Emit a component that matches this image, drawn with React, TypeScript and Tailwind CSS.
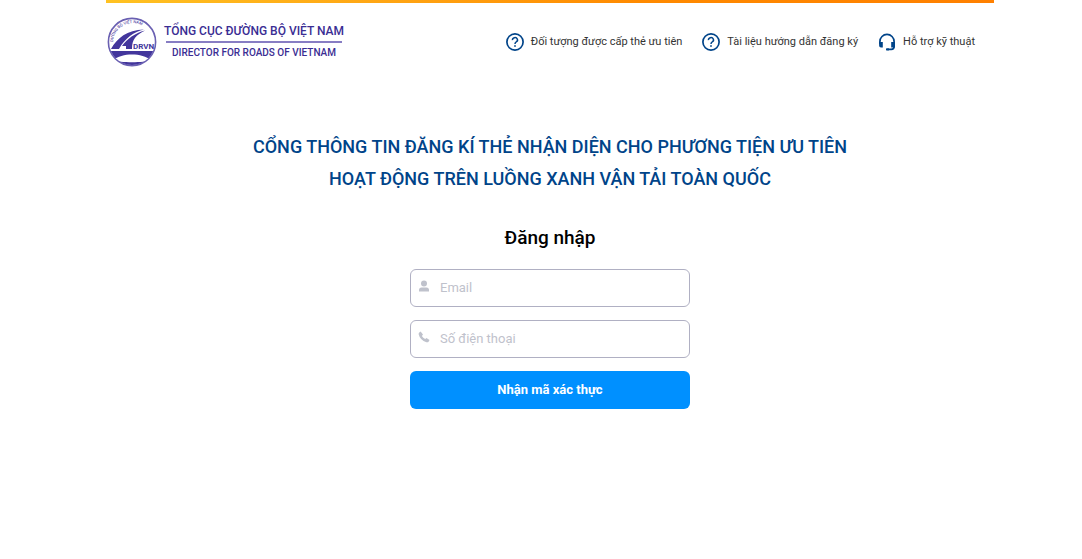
import React, { useState } from 'react';

const Logo = () => (
  <svg viewBox="0 0 50 50" className="size-[50px] shrink-0" role="img" aria-label="DRVN">
    <defs>
      <clipPath id="logo-disc">
        <circle cx="25" cy="25" r="23" />
      </clipPath>
      <path id="logo-arc" d="M6 25 A19.500 19.500 0 0 1 43 17" />
    </defs>
    <circle cx="25" cy="25" r="23.6" fill="#fff" stroke="#6a60b2" strokeWidth="1.6" />
    <g clipPath="url(#logo-disc)" fill="#43369c">
      <path d="M4 32 C10 21 20 13 37 12.500 C27 15 18 21 12 32 Z" />
      <path d="M15 29 C20 22 28 16 38 13.500 C29 18 25 22 25 32 H19 V29 Z" />
      <path d="M0 34 H50 V50 H0 Z" />
      <path d="M6 43 C15 35.500 35 35.500 44 43 C37 46 13 46 6 43 Z" fill="#fff" />
    </g>
    <text x="26" y="32" fontSize="8" fontWeight="700" fill="#43369c">DRVN</text>
    <text fontSize="4" fontWeight="500" fill="#5c51ab">
      <textPath href="#logo-arc">ĐƯỜNG BỘ VIỆT NAM</textPath>
    </text>
  </svg>
);

const HelpIcon = () => (
  <svg viewBox="0 0 18 18" className="size-[18px] shrink-0" fill="none" stroke="#004489" strokeWidth="1.7" aria-hidden="true">
    <circle cx="9" cy="9" r="8.100" />
    <path d="M6.500 7.200 A2.500 2.300 0 1 1 10.300 8.900 C9.300 9.500 9 9.800 9 10.900" strokeWidth="1.5" />
    <path d="M9 12.200 V13.800" />
  </svg>
);

const HeadsetIcon = () => (
  <svg viewBox="0 0 18 18" className="size-[18px] shrink-0" fill="none" stroke="#004489" strokeWidth="1.7" aria-hidden="true">
    <path d="M1.900 11 V8.500 A7.100 7.100 0 0 1 16.100 8.500 V13.500 Q16.100 16.300 13.300 16.300 H9" />
    <path d="M1.100 9 H4.800 V14.600 H3 Q1.100 14.600 1.100 12.600 Z M16.900 9 H13.200 V14.600 H16.900 Z" fill="#004489" stroke="none" />
    <path d="M8 15.400 H11 V17.400 H8 Z" fill="#004489" stroke="none" />
  </svg>
);

const UserIcon = () => (
  <svg viewBox="0 0 12 12" className="size-3" fill="#bfc2cc" aria-hidden="true">
    <circle cx="6" cy="3.500" r="3" />
    <path d="M1 11.500 V10 Q1 7.500 3.500 7.500 H8.500 Q11 7.500 11 10 V11.500 Z" />
  </svg>
);

const PhoneIcon = () => (
  <svg viewBox="0 0 12 12" className="size-3" fill="#bfc2cc" aria-hidden="true">
    <path d="M1 1.800 L2.600 .6 L5 3.500 L3.900 5 Q5 7 7.200 8 L8.500 7 L11.500 9 L10.400 11 Q9.700 11.500 8.400 11.200 Q2 9 .7 3.500 Q.5 2.300 1 1.800 Z" />
  </svg>
);

const navLinks = [
  { label: 'Đối tượng được cấp thẻ ưu tiên', icon: <HelpIcon /> },
  { label: 'Tài liệu hướng dẫn đăng ký', icon: <HelpIcon /> },
  { label: 'Hỗ trợ kỹ thuật', icon: <HeadsetIcon /> },
];

interface FieldProps {
  id: string;
  type: string;
  label: string;
  icon: React.ReactNode;
  value: string;
  onChange: (value: string) => void;
}

const Field = ({ id, type, label, icon, value, onChange }: FieldProps) => (
  <div className="flex h-[38px] items-center gap-2 rounded-md border border-[#b0b0c3] px-[7px] focus-within:border-[#0090ff]">
    <label htmlFor={id} aria-label={label} className="shrink-0 pb-1">
      {icon}
    </label>
    <input
      id={id}
      type={type}
      value={value}
      placeholder={label}
      aria-label={label}
      onChange={(e) => onChange(e.target.value)}
      className="min-w-0 flex-1 bg-transparent px-0.5 text-[13px] leading-5 text-black outline-none placeholder:text-[#bfc2cc]"
    />
  </div>
);

export default function App() {
  const [email, setEmail] = useState('');
  const [phone, setPhone] = useState('');

  return (
    <div className="min-h-screen bg-white pl-[106px] pr-[88px] font-[Roboto,'Noto_Sans',sans-serif]">
      <div className="h-[3px] bg-linear-to-r from-[#ffc222] via-[#ff8a00] via-60% to-[#ff8000]" />

      <header className="flex items-center justify-between pt-3.5 pr-[19px] pl-px">
        <a href="#" className="flex items-center gap-[7px]">
          <Logo />
          <span className="flex flex-col items-center font-medium text-[#3a2d93]">
            <span className="text-xs leading-5">TỔNG CỤC ĐƯỜNG BỘ VIỆT NAM</span>
            <span className="border-t-2 border-[#877dc3] px-1.5 text-[10px] leading-5">DIRECTOR FOR ROADS OF VIETNAM</span>
          </span>
        </a>
        <nav className="flex items-center gap-5">
          {navLinks.map((link) => (
            <a key={link.label} href="#" className="flex items-center gap-[7px] text-[11px] leading-4 whitespace-nowrap text-[#333]">
              {link.icon}
              {link.label}
            </a>
          ))}
        </nav>
      </header>

      <main className="flex flex-col items-center pt-16">
        <h1 className="text-center text-lg leading-8 font-medium text-[#004489]">
          CỔNG THÔNG TIN ĐĂNG KÍ THẺ NHẬN DIỆN CHO PHƯƠNG TIỆN ƯU TIÊN
          <br />
          HOẠT ĐỘNG TRÊN LUỒNG XANH VẬN TẢI TOÀN QUỐC
        </h1>

        <form onSubmit={(e) => e.preventDefault()} className="mt-7 flex w-full max-w-[280px] flex-col gap-[13px]">
          <h2 className="mb-1 text-center text-[19px] leading-[29px] font-medium text-black">Đăng nhập</h2>
          <Field id="email" type="email" label="Email" icon={<UserIcon />} value={email} onChange={setEmail} />
          <Field id="phone" type="tel" label="Số điện thoại" icon={<PhoneIcon />} value={phone} onChange={setPhone} />
          <button type="submit" className="h-[38px] rounded-md bg-[#0090ff] text-[13px] font-bold text-white">
            Nhận mã xác thực
          </button>
        </form>
      </main>
    </div>
  );
}
